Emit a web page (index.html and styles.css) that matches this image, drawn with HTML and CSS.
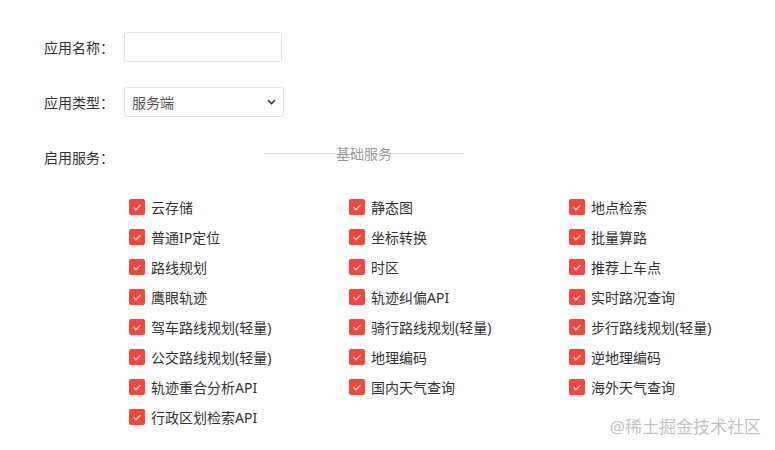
FILE: index.html
```html
<!DOCTYPE html>
<html lang="zh-CN">
<head>
    <meta charset="UTF-8">
    <title>创建应用</title>
    <link rel="stylesheet" href="styles.css">
</head>
<body>
    <form class="app-form">
        <div class="form-row">
            <label class="form-label">应用名称：</label>
            <input class="form-input" type="text">
        </div>
        <div class="form-row">
            <label class="form-label">应用类型：</label>
            <div class="select-box">
                <span class="select-value">服务端</span>
                <svg class="select-arrow" width="9" height="6" viewBox="0 0 9 6"><path d="M1 1.2 L4.5 4.5 L8 1.2" fill="none" stroke="#444" stroke-width="1.7"/></svg>
            </div>
        </div>
        <div class="form-row service-row">
            <label class="form-label">启用服务：</label>
            <div class="divider">
                <span class="divider-line"></span>
                <span class="divider-text">基础服务</span>
                <span class="divider-line"></span>
            </div>
        </div>

        <div class="service-grid">
            <label class="check"><span class="box"></span>云存储</label>
            <label class="check"><span class="box"></span>静态图</label>
            <label class="check"><span class="box"></span>地点检索</label>
            <label class="check"><span class="box"></span>普通IP定位</label>
            <label class="check"><span class="box"></span>坐标转换</label>
            <label class="check"><span class="box"></span>批量算路</label>
            <label class="check"><span class="box"></span>路线规划</label>
            <label class="check"><span class="box"></span>时区</label>
            <label class="check"><span class="box"></span>推荐上车点</label>
            <label class="check"><span class="box"></span>鹰眼轨迹</label>
            <label class="check"><span class="box"></span>轨迹纠偏API</label>
            <label class="check"><span class="box"></span>实时路况查询</label>
            <label class="check"><span class="box"></span>驾车路线规划(轻量)</label>
            <label class="check"><span class="box"></span>骑行路线规划(轻量)</label>
            <label class="check"><span class="box"></span>步行路线规划(轻量)</label>
            <label class="check"><span class="box"></span>公交路线规划(轻量)</label>
            <label class="check"><span class="box"></span>地理编码</label>
            <label class="check"><span class="box"></span>逆地理编码</label>
            <label class="check"><span class="box"></span>轨迹重合分析API</label>
            <label class="check"><span class="box"></span>国内天气查询</label>
            <label class="check"><span class="box"></span>海外天气查询</label>
            <label class="check"><span class="box"></span>行政区划检索API</label>
        </div>
    </form>

    <div class="watermark">@稀土掘金技术社区</div>
</body>
</html>
```

FILE: styles.css
```css
* {
    margin: 0;
    padding: 0;
    box-sizing: border-box;
}

body {
    font-family: "Noto Sans", "Noto Sans CJK SC", sans-serif;
    color: #333;
    background: #fff;
    width: 775px;
    height: 450px;
    overflow: hidden;
    position: relative;
}

.app-form {
    padding: 32px 0 0 44px;
}

.form-row {
    display: flex;
    align-items: center;
    height: 30px;
    margin-bottom: 25px;
}

.form-label {
    width: 80px;
    font-size: 14px;
    color: #333;
}

.form-input {
    width: 158px;
    height: 30px;
    border: 1px solid #e3e3e3;
    border-radius: 2px;
    outline: none;
}

.select-box {
    width: 160px;
    height: 30px;
    border: 1px solid #e3e3e3;
    border-radius: 2px;
    display: flex;
    align-items: center;
    justify-content: space-between;
    padding: 0 7px 0 7px;
}

.select-value {
    font-size: 14px;
    color: #555;
}

.service-row {
    align-items: flex-start;
    height: auto;
    margin-bottom: 0;
}

.service-row .form-label {
    padding-top: 5px;
}

.divider {
    display: flex;
    align-items: center;
    width: 200px;
    margin-left: 140px;
    margin-top: 1px;
}

.divider-line {
    flex: 1;
    height: 1px;
    background: #ddd;
}

.divider-text {
    font-size: 14px;
    color: #999;
}

.service-grid {
    display: grid;
    grid-template-columns: repeat(3, 220px);
    grid-auto-rows: 30px;
    margin: 25px 0 0 85px;
}

.check {
    display: flex;
    align-items: center;
    font-size: 14px;
    color: #333;
}

.box {
    width: 16px;
    height: 16px;
    border-radius: 2px;
    background: #f4463c;
    margin-right: 6px;
    position: relative;
}

.box::after {
    content: '';
    position: absolute;
    left: 6px;
    top: 4px;
    width: 3px;
    height: 6px;
    border: solid #fff;
    border-width: 0 1.3px 1.3px 0;
    transform: rotate(45deg);
}

.watermark {
    position: absolute;
    right: 14px;
    bottom: 12px;
    font-size: 17px;
    color: #c4c4c4;
    text-shadow: 0 0 1px #fff;
}
```
